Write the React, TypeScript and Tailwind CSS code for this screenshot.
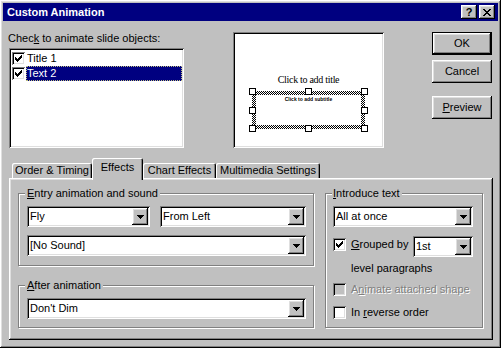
import React from 'react';

// classic 3D borders
const raised =
  'shadow-[inset_-1px_-1px_#000,inset_1px_1px_#fff,inset_-2px_-2px_#808080,inset_2px_2px_#dfdfdf]';
const sunken =
  'shadow-[inset_1px_1px_#808080,inset_-1px_-1px_#fff,inset_2px_2px_#000,inset_-2px_-2px_#dfdfdf]';

function Pixels({ w, h, px, color = '#000' }: { w: number; h: number; px: number[][]; color?: string }) {
  return (
    <svg width={w} height={h} viewBox={`0 0 ${w} ${h}`} shapeRendering="crispEdges">
      {px.map(([x, y, len = 1]) => (
        <rect key={`${x}-${y}`} x={x} y={y} width={len} height={1} fill={color} />
      ))}
    </svg>
  );
}

function CheckMark() {
  return (
    <Pixels
      w={7}
      h={7}
      px={[[6, 0], [5, 1, 2], [0, 2], [4, 2, 3], [0, 3, 2], [3, 3, 3], [0, 4, 5], [1, 5, 3], [2, 6]]}
    />
  );
}

function Arrow() {
  return <Pixels w={7} h={4} px={[[0, 0, 7], [1, 1, 5], [2, 2, 3], [3, 3, 1]]} />;
}

function CloseGlyph() {
  return (
    <Pixels
      w={8}
      h={7}
      px={[[0, 0, 2], [6, 0, 2], [1, 1, 2], [5, 1, 2], [2, 2, 4], [3, 3, 2], [2, 4, 4], [1, 5, 2], [5, 5, 2], [0, 6, 2], [6, 6, 2]]}
    />
  );
}

function Check({ checked, disabled }: { checked?: boolean; disabled?: boolean }) {
  return (
    <span
      className={`flex h-[13px] w-[13px] shrink-0 items-center justify-center ${
        disabled ? 'bg-[#c0c0c0]' : 'bg-white'
      } ${sunken}`}
    >
      {checked && <CheckMark />}
    </span>
  );
}

function Combo({ value, className }: { value: string; className: string }) {
  return (
    <div className={`flex h-[21px] items-center bg-white p-[2px] ${sunken} ${className}`}>
      <span className="flex-1 pl-[1px] leading-[13px]">{value}</span>
      <span className={`flex h-[17px] w-[16px] items-center justify-center bg-[#c0c0c0] ${raised}`}>
        <Arrow />
      </span>
    </div>
  );
}

function Button({ children, isDefault }: { children: React.ReactNode; isDefault?: boolean }) {
  return (
    <div
      className={`flex h-[23px] w-[60px] items-center justify-center ${
        isDefault ? 'border border-black' : ''
      }`}
    >
      <div className={`flex h-full w-full items-center justify-center ${raised}`}>{children}</div>
    </div>
  );
}

function Group({ label, className, children }: { label: React.ReactNode; className: string; children: React.ReactNode }) {
  return (
    <div
      className={`relative border border-[#808080] shadow-[inset_1px_1px_#fff,1px_1px_#fff] ${className}`}
    >
      <span className="absolute -top-[7px] left-[6px] bg-[#c0c0c0] px-[2px] leading-[13px]">{label}</span>
      {children}
    </div>
  );
}

function Tab({ label, active }: { label: string; active?: boolean }) {
  if (active) {
    return (
      <div
        className={`relative z-10 -mb-[2px] flex h-[22px] w-[51px] justify-center rounded-t-[2px] bg-[#c0c0c0] pt-[3px] leading-[13px] shadow-[inset_1px_1px_#fff,inset_-1px_0_#000,inset_-2px_0_#808080]`}
      >
        {label}
      </div>
    );
  }
  return null;
}

function FlatTab({ label, w }: { label: string; w: string }) {
  return (
    <div
      className={`flex h-[15px] items-center justify-center rounded-t-[2px] leading-[13px] shadow-[inset_1px_1px_#fff,inset_-1px_0_#000,inset_-2px_0_#808080] ${w}`}
    >
      {label}
    </div>
  );
}

export default function App() {
  return (
    <div
      className={`h-[348px] w-[501px] overflow-hidden bg-[#c0c0c0] p-[3px] font-['Liberation_Sans',Arial,sans-serif] text-[11px] text-black ${raised}`}
    >
      {/* Title bar */}
      <div className="flex h-[18px] items-center justify-between bg-[#000080] pl-[4px] pr-[3px]">
        <span className="font-bold leading-[13px] text-white">Custom Animation</span>
        <div className="flex gap-[2px]">
          <div className={`flex h-[14px] w-[16px] items-center justify-center bg-[#c0c0c0] text-[11px] font-bold leading-none ${raised}`}>
            ?
          </div>
          <div className={`flex h-[14px] w-[16px] items-center justify-center bg-[#c0c0c0] ${raised}`}>
            <CloseGlyph />
          </div>
        </div>
      </div>

      {/* Objects, preview and buttons */}
      <div className="flex h-[137px] pl-[5px] pt-[11px]">
        <div className="flex flex-col">
          <div className="leading-[13px]">
            Chec<u>k</u> to animate slide objects:
          </div>
          <div className={`ml-[1px] mt-[3px] h-[100px] w-[175px] bg-white pl-[3px] pt-[3px] ${sunken}`}>
            <div className="flex h-[15px] items-center">
              <Check checked />
              <span className="ml-[2px] leading-[13px]">Title 1</span>
            </div>
            <div className="flex h-[15px] items-center">
              <Check checked />
              <span className="ml-[1px] flex h-[15px] w-[156px] items-center bg-[#000080] pl-[1px] leading-[13px] text-white outline-1 -outline-offset-1 outline-dotted outline-[#c0c080]">
                Text 2
              </span>
            </div>
          </div>
        </div>

        <div className={`ml-[49px] flex h-[116px] w-[151px] flex-col items-center bg-white pt-[42px] ${sunken}`}>
          <div className="font-['Liberation_Serif',serif] text-[10px] leading-[12px] tracking-[-0.3px]">
            Click to add title
          </div>
          <div className="relative mt-[5px] h-[38px] w-[113px] bg-[image:repeating-conic-gradient(#000_0_25%,#fff_0_50%)] bg-[length:2px_2px] p-[4px]">
            <div className="flex h-full w-full justify-center bg-white pt-[1px] text-[5px] font-bold leading-[6px]">
              Click to add subtitle
            </div>
            <span className="absolute -left-[3px] -top-[3px] h-[7px] w-[7px] border border-black bg-white" />
            <span className="absolute -top-[3px] left-[53px] h-[7px] w-[7px] border border-black bg-white" />
            <span className="absolute -right-[3px] -top-[3px] h-[7px] w-[7px] border border-black bg-white" />
            <span className="absolute -left-[3px] top-[16px] h-[7px] w-[7px] border border-black bg-white" />
            <span className="absolute -right-[3px] top-[16px] h-[7px] w-[7px] border border-black bg-white" />
            <span className="absolute -bottom-[3px] -left-[3px] h-[7px] w-[7px] border border-black bg-white" />
            <span className="absolute -bottom-[3px] left-[53px] h-[7px] w-[7px] border border-black bg-white" />
            <span className="absolute -bottom-[3px] -right-[3px] h-[7px] w-[7px] border border-black bg-white" />
          </div>
        </div>

        <div className="ml-[48px] flex flex-col">
          <Button isDefault>OK</Button>
          <div className="mt-[5px]">
            <Button>Cancel</Button>
          </div>
          <div className="mt-[13px]">
            <Button>
              <u>P</u>review
            </Button>
          </div>
        </div>
      </div>

      {/* Tabs */}
      <div className="ml-[9px] flex h-[20px] items-end">
        <FlatTab label="Order & Timing" w="w-[80px]" />
        <Tab label="Effects" active />
        <FlatTab label="Chart Effects" w="w-[73px]" />
        <FlatTab label="Multimedia Settings" w="w-[104px]" />
      </div>

      {/* Effects panel */}
      <div className={`ml-[6px] flex h-[162px] w-[484px] pl-[9px] pt-[15px] ${raised}`}>
        <div className="flex w-[296px] flex-col">
          <Group
            className="h-[73px] pl-[8px] pt-[12px]"
            label={
              <>
                <u>E</u>ntry animation and sound
              </>
            }
          >
            <div className="flex">
              <Combo value="Fly" className="w-[123px]" />
              <Combo value="From Left" className="ml-[10px] w-[146px]" />
            </div>
            <Combo value="[No Sound]" className="mt-[8px] w-[279px]" />
          </Group>

          <Group
            className="mt-[19px] h-[43px] pl-[8px] pt-[12px]"
            label={
              <>
                <u>A</u>fter animation
              </>
            }
          >
            <Combo value="Don't Dim" className="w-[279px]" />
          </Group>
        </div>

        <Group
          className="ml-[11px] h-[135px] w-[158px] pl-[7px] pt-[12px]"
          label={
            <span className="-ml-[1px]">
              <u>I</u>ntroduce text
            </span>
          }
        >
          <Combo value="All at once" className="w-[140px]" />
          <div className="mt-[9px] flex items-start">
            <div className="mt-[2px]">
              <Check checked />
            </div>
            <span className="ml-[5px] mt-[2px] leading-[13px]">
              <u>G</u>rouped by
            </span>
            <Combo value="1st" className="ml-auto mr-[9px] w-[60px]" />
          </div>
          <div className="ml-[18px] mt-[5px] leading-[13px]">level paragraphs</div>
          <div className="mt-[8px] flex items-center">
            <Check disabled />
            <span className="ml-[5px] leading-[13px] text-[#808080] [text-shadow:1px_1px_0_#fff]">
              A<u>n</u>imate attached shape
            </span>
          </div>
          <div className="mt-[10px] flex items-center">
            <Check />
            <span className="ml-[5px] leading-[13px]">
              In <u>r</u>everse order
            </span>
          </div>
        </Group>
      </div>
    </div>
  );
}
